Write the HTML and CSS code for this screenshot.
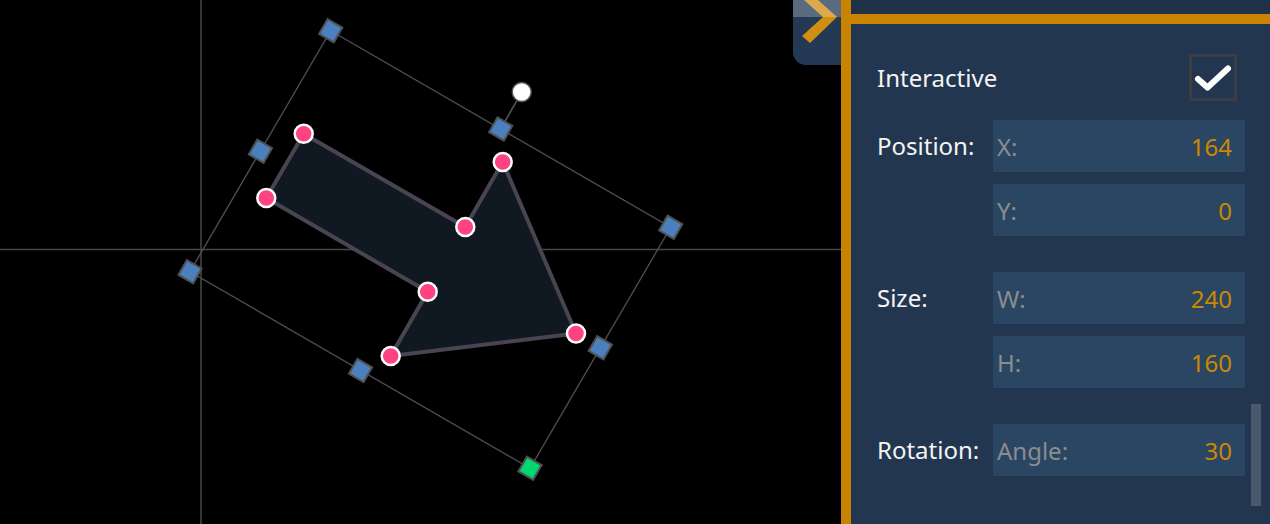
FILE: index.html
```html
<!DOCTYPE html>
<html lang="en">
<head>
<meta charset="utf-8">
<title>Shape editor</title>
<link rel="stylesheet" href="styles.css">
</head>
<body>
<div class="canvas">
  <svg class="stage" width="841" height="524" viewBox="0 0 841 524">
    <line class="axis" x1="201" y1="0" x2="201" y2="524"/>
    <line class="axis" x1="0" y1="249.5" x2="841" y2="249.5"/>
    <polygon class="bbox" points="330.7,30.7 670.7,227.3 530,468.3 190,271.7"/>
    <polygon class="shape" points="303.7,133.7 465.3,227 502.7,162 576,333.5 390.7,356 427.7,291.7 266.3,198"/>
    <line class="rot-line" x1="500.7" y1="129" x2="521.7" y2="92"/>
    <circle class="rot-handle" cx="521.7" cy="92" r="9.5"/>
    <g class="handle"><rect x="-8.5" y="-8.5" width="17" height="17" transform="translate(330.7 30.7) rotate(30)"/></g>
    <g class="handle"><rect x="-8.5" y="-8.5" width="17" height="17" transform="translate(500.7 129) rotate(30)"/></g>
    <g class="handle"><rect x="-8.5" y="-8.5" width="17" height="17" transform="translate(670.7 227.3) rotate(30)"/></g>
    <g class="handle"><rect x="-8.5" y="-8.5" width="17" height="17" transform="translate(600.3 347.8) rotate(30)"/></g>
    <g class="handle"><rect x="-8.5" y="-8.5" width="17" height="17" transform="translate(360.5 370.5) rotate(30)"/></g>
    <g class="handle"><rect x="-8.5" y="-8.5" width="17" height="17" transform="translate(190 271.7) rotate(30)"/></g>
    <g class="handle"><rect x="-8.5" y="-8.5" width="17" height="17" transform="translate(260.4 151.2) rotate(30)"/></g>
    <g class="handle green"><rect x="-8.5" y="-8.5" width="17" height="17" transform="translate(530 468.3) rotate(30)"/></g>
    <circle class="vertex" cx="303.7" cy="133.7" r="9"/>
    <circle class="vertex" cx="266.3" cy="198" r="9"/>
    <circle class="vertex" cx="465.3" cy="227" r="9"/>
    <circle class="vertex" cx="502.7" cy="162" r="9"/>
    <circle class="vertex" cx="427.7" cy="291.7" r="9"/>
    <circle class="vertex" cx="390.7" cy="356" r="9"/>
    <circle class="vertex" cx="576" cy="333.5" r="9"/>
  </svg>
  <svg class="tab" width="48" height="65" viewBox="0 0 48 65">
    <path class="tab-bg" d="M0 0 H48 V65 H13 A13 13 0 0 1 0 52 Z"/>
    <polygon class="tab-chev" points="11,0 25,0 44,17 17,43 9,36 30,17"/>
    <path class="tab-gloss" d="M0 0 H48 V17 H0 Z"/>
  </svg>
</div>
<div class="panel">
  <div class="panel-head"></div>
  <div class="panel-body">
    <div class="row-check">
      <span class="label">Interactive</span>
      <span class="checkbox">
        <svg width="42" height="41" viewBox="0 0 42 41"><polyline points="6,22 15.5,30.5 36,11.5"/></svg>
      </span>
    </div>
    <div class="group first">
      <span class="label">Position:</span>
      <div class="field"><span class="k">X:</span><span class="v">164</span></div>
      <div class="field"><span class="k">Y:</span><span class="v">0</span></div>
    </div>
    <div class="group">
      <span class="label">Size:</span>
      <div class="field"><span class="k">W:</span><span class="v">240</span></div>
      <div class="field"><span class="k">H:</span><span class="v">160</span></div>
    </div>
    <div class="group">
      <span class="label">Rotation:</span>
      <div class="field"><span class="k">Angle:</span><span class="v">30</span></div>
    </div>
  </div>
  <div class="scrollbar"></div>
</div>
</body>
</html>
```
FILE: styles.css
```css
html, body {
  margin: 0;
  padding: 0;
}
body {
  width: 1270px;
  height: 524px;
  overflow: hidden;
  display: flex;
  background: #000;
  font-family: "Noto Sans", "DejaVu Sans", sans-serif;
}
.canvas {
  position: relative;
  flex: none;
  width: 841px;
  height: 524px;
  background: #000;
}
.stage {
  display: block;
}
.axis {
  stroke: #474747;
  stroke-width: 1.5;
}
.bbox {
  fill: none;
  stroke: #505050;
  stroke-width: 1.3;
}
.shape {
  fill: #101822;
  stroke: #4a4452;
  stroke-width: 4;
  stroke-linejoin: round;
}
.rot-line {
  stroke: #555;
  stroke-width: 1.5;
}
.rot-handle {
  fill: #fff;
  stroke: #555;
  stroke-width: 1.5;
}
.handle rect {
  fill: #4b80be;
  stroke: #505050;
  stroke-width: 2;
}
.handle.green rect {
  fill: #00d672;
}
.vertex {
  fill: #ff4280;
  stroke: #fff;
  stroke-width: 2.5;
}
.tab {
  position: absolute;
  top: 0;
  right: 0;
  display: block;
}
.tab-bg {
  fill: #243a54;
}
.tab-chev {
  fill: #d08e12;
}
.tab-gloss {
  fill: #fff;
  opacity: 0.25;
}
.panel {
  position: relative;
  flex: 1;
  display: flex;
  flex-direction: column;
  border-left: 10px solid #c88400;
  background: #22374f;
}
.panel-head {
  height: 14px;
  background: #1f3147;
  border-bottom: 10px solid #c88400;
}
.panel-body {
  padding: 30px 25px 0 26px;
}
.label {
  color: #f4f4f4;
  font-size: 24px;
  line-height: 32px;
}
.row-check {
  display: flex;
  justify-content: space-between;
  align-items: center;
  height: 47px;
  padding-right: 8px;
}
.checkbox {
  box-sizing: border-box;
  width: 48px;
  height: 47px;
  border: 3px solid #3a3d41;
  display: flex;
}
.checkbox polyline {
  fill: none;
  stroke: #fff;
  stroke-width: 6;
  stroke-linecap: round;
  stroke-linejoin: round;
}
.group {
  display: grid;
  grid-template-columns: 116px 252px;
  row-gap: 12px;
  margin-top: 36px;
}
.group.first {
  margin-top: 19px;
}
.group .label {
  grid-column: 1;
  grid-row: 1;
  align-self: center;
}
.field {
  grid-column: 2;
  box-sizing: border-box;
  height: 52px;
  background: #2b4662;
  display: flex;
  justify-content: space-between;
  align-items: center;
  padding: 0 13px 0 4px;
  font-size: 24px;
}
.field .k {
  color: #898d92;
}
.field .v {
  color: #cc8800;
}
.scrollbar {
  position: absolute;
  top: 404px;
  right: 9px;
  width: 10px;
  height: 102px;
  background: #4a5a6e;
}
```
